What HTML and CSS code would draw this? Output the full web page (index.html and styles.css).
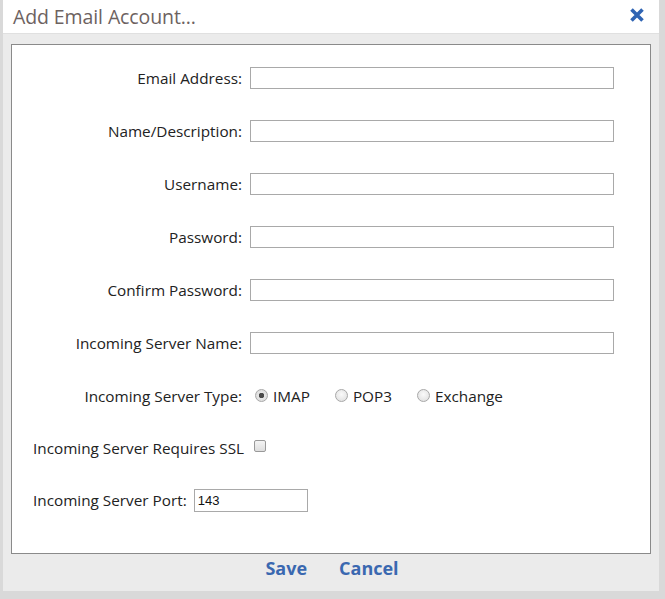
FILE: index.html
```html
<!DOCTYPE html>
<html>
<head>
<meta charset="utf-8">
<link rel="stylesheet" href="styles.css">
</head>
<body>
<div class="dialog">
  <div class="titlebar">
    <span class="title">Add Email Account...</span>
    <svg class="close" width="16" height="16" viewBox="0 0 16 16"><path d="M2.5 2.5 L13.5 13.5 M13.5 2.5 L2.5 13.5" stroke="#2f64b3" stroke-width="3.6" stroke-linecap="butt"/></svg>
  </div>
  <div class="panel">
    <div class="row"><label class="lbl">Email Address:</label><input class="txt" type="text"></div>
    <div class="row"><label class="lbl">Name/Description:</label><input class="txt" type="text"></div>
    <div class="row"><label class="lbl">Username:</label><input class="txt" type="text"></div>
    <div class="row"><label class="lbl">Password:</label><input class="txt" type="password"></div>
    <div class="row"><label class="lbl">Confirm Password:</label><input class="txt" type="password"></div>
    <div class="row"><label class="lbl">Incoming Server Name:</label><input class="txt" type="text"></div>
    <div class="row"><label class="lbl">Incoming Server Type:</label>
      <div class="radios">
        <span class="opt"><input class="rad" type="radio" name="t" checked>IMAP</span>
        <span class="opt"><input class="rad" type="radio" name="t">POP3</span>
        <span class="opt"><input class="rad" type="radio" name="t">Exchange</span>
      </div>
    </div>
    <div class="row free"><label class="lbl2">Incoming Server Requires SSL</label><input class="chk" type="checkbox"></div>
    <div class="row free"><label class="lbl2">Incoming Server Port:</label><input class="port" type="text" value="143"></div>
  </div>
  <div class="buttons">
    <span class="btn">Save</span>
    <span class="btn">Cancel</span>
  </div>
</div>
</body>
</html>
```
FILE: styles.css
```css
html, body {
  margin: 0;
  padding: 0;
}
body {
  background: #d9d9d9;
  width: 665px;
  height: 599px;
  overflow: hidden;
  font-family: "Open Sans", "Liberation Sans", sans-serif;
}
.dialog {
  margin-left: 3px;
  width: 656px;
  height: 591px;
  background: #ebebeb;
  display: flex;
  flex-direction: column;
}
.titlebar {
  height: 34px;
  background: #fff;
  border-bottom: 1px solid #e0e0e0;
  box-sizing: border-box;
  display: flex;
  align-items: center;
  justify-content: space-between;
  padding: 0 14px 0 10px;
}
.title {
  font-size: 19.5px;
  color: #6d625f;
  letter-spacing: -0.1px;
  margin-top: -1px;
}
.close {
  margin-top: -4px;
}
.panel {
  margin: 10px 8px 0 8px;
  height: 510px;
  box-sizing: border-box;
  background: #fff;
  border: 1px solid #8a8a8a;
  padding-top: 6px;
  display: flex;
  flex-direction: column;
}
.row {
  height: 53px;
  flex: none;
  display: flex;
  align-items: center;
  font-size: 15.3px;
  color: #222;
}
.lbl {
  width: 230px;
  text-align: right;
  padding-right: 8px;
  flex: none;
}
.txt {
  width: 364px;
  height: 22px;
  box-sizing: border-box;
  border: 1px solid #a9a9a9;
  margin: 0;
  padding: 1px 3px;
  font: 13px "Liberation Sans", sans-serif;
}
.radios {
  display: flex;
  align-items: center;
}
.opt {
  display: flex;
  align-items: center;
  margin-right: 20px;
}
.rad {
  appearance: none;
  -webkit-appearance: none;
  width: 13px;
  height: 13px;
  margin: 0 5px 0 5px;
  border-radius: 50%;
  border: 1px solid #a8a8a8;
  background: radial-gradient(circle at 50% 40%, #fafafa 0%, #dcdcdc 100%);
  box-sizing: border-box;
}
.rad:checked {
  background: radial-gradient(circle, #4a4a4a 0 2.5px, #e6e6e6 3px, #d6d6d6 100%);
}
.free {
  padding-left: 21px;
  height: 52px;
}
.lbl2 {
  margin-right: 8px;
}
.chk {
  appearance: none;
  -webkit-appearance: none;
  width: 12px;
  height: 12px;
  margin: -4px 0 0 2px;
  border: 1px solid #999;
  border-radius: 2px;
  background: linear-gradient(#f4f4f4, #dedede);
}
.port {
  width: 114px;
  height: 23px;
  box-sizing: border-box;
  border: 1px solid #a9a9a9;
  margin: 0 0 0 -1px;
  padding: 1px 3px;
  font: 13px "Liberation Sans", sans-serif;
  color: #111;
}
.buttons {
  display: flex;
  justify-content: center;
  gap: 32px;
  padding-top: 2px;
  padding-left: 2px;
}
.btn {
  font-size: 18px;
  font-weight: 700;
  color: #3a68b0;
}
```
